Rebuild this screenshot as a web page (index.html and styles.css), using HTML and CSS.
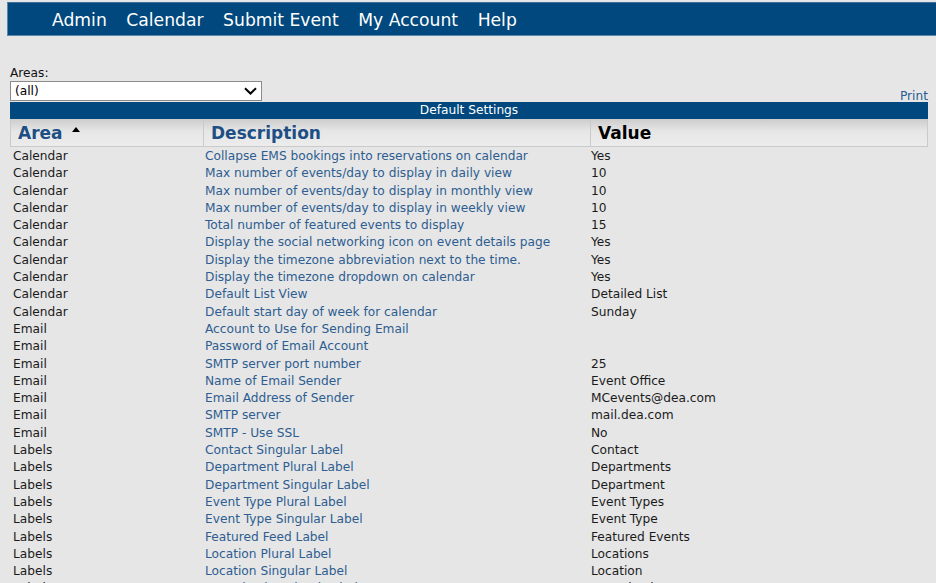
FILE: index.html
```html
<!DOCTYPE html>
<html>
<head>
<meta charset="utf-8">
<link rel="stylesheet" href="styles.css">
</head>
<body>
<div class="nav">
  <a>Admin</a><a>Calendar</a><a>Submit Event</a><a>My Account</a><a>Help</a>
</div>
<div class="content">
  <div class="filters">
    <div class="areas">
      <label>Areas:</label>
      <div class="select"><span>(all)</span>
        <svg width="13" height="8" viewBox="0 0 13 8"><path d="M1 1.2 L6.5 6.5 L12 1.2" fill="none" stroke="#000" stroke-width="2"/></svg>
      </div>
    </div>
    <a class="print">Print</a>
  </div>
  <div class="title">Default Settings</div>
  <div class="grid">
    <div class="hrow">
      <div class="hc c1 blue">Area <span class="arrow"></span></div>
      <div class="hc c2 blue">Description</div>
      <div class="hc c3">Value</div>
    </div>
    <div class="rows">
    <div class="row"><div class="c1">Calendar</div><div class="c2">Collapse EMS bookings into reservations on calendar</div><div class="c3">Yes</div></div>
    <div class="row"><div class="c1">Calendar</div><div class="c2">Max number of events/day to display in daily view</div><div class="c3">10</div></div>
    <div class="row"><div class="c1">Calendar</div><div class="c2">Max number of events/day to display in monthly view</div><div class="c3">10</div></div>
    <div class="row"><div class="c1">Calendar</div><div class="c2">Max number of events/day to display in weekly view</div><div class="c3">10</div></div>
    <div class="row"><div class="c1">Calendar</div><div class="c2">Total number of featured events to display</div><div class="c3">15</div></div>
    <div class="row"><div class="c1">Calendar</div><div class="c2">Display the social networking icon on event details page</div><div class="c3">Yes</div></div>
    <div class="row"><div class="c1">Calendar</div><div class="c2">Display the timezone abbreviation next to the time.</div><div class="c3">Yes</div></div>
    <div class="row"><div class="c1">Calendar</div><div class="c2">Display the timezone dropdown on calendar</div><div class="c3">Yes</div></div>
    <div class="row"><div class="c1">Calendar</div><div class="c2">Default List View</div><div class="c3">Detailed List</div></div>
    <div class="row"><div class="c1">Calendar</div><div class="c2">Default start day of week for calendar</div><div class="c3">Sunday</div></div>
    <div class="row"><div class="c1">Email</div><div class="c2">Account to Use for Sending Email</div><div class="c3"></div></div>
    <div class="row"><div class="c1">Email</div><div class="c2">Password of Email Account</div><div class="c3"></div></div>
    <div class="row"><div class="c1">Email</div><div class="c2">SMTP server port number</div><div class="c3">25</div></div>
    <div class="row"><div class="c1">Email</div><div class="c2">Name of Email Sender</div><div class="c3">Event Office</div></div>
    <div class="row"><div class="c1">Email</div><div class="c2">Email Address of Sender</div><div class="c3">MCevents@dea.com</div></div>
    <div class="row"><div class="c1">Email</div><div class="c2">SMTP server</div><div class="c3">mail.dea.com</div></div>
    <div class="row"><div class="c1">Email</div><div class="c2">SMTP - Use SSL</div><div class="c3">No</div></div>
    <div class="row"><div class="c1">Labels</div><div class="c2">Contact Singular Label</div><div class="c3">Contact</div></div>
    <div class="row"><div class="c1">Labels</div><div class="c2">Department Plural Label</div><div class="c3">Departments</div></div>
    <div class="row"><div class="c1">Labels</div><div class="c2">Department Singular Label</div><div class="c3">Department</div></div>
    <div class="row"><div class="c1">Labels</div><div class="c2">Event Type Plural Label</div><div class="c3">Event Types</div></div>
    <div class="row"><div class="c1">Labels</div><div class="c2">Event Type Singular Label</div><div class="c3">Event Type</div></div>
    <div class="row"><div class="c1">Labels</div><div class="c2">Featured Feed Label</div><div class="c3">Featured Events</div></div>
    <div class="row"><div class="c1">Labels</div><div class="c2">Location Plural Label</div><div class="c3">Locations</div></div>
    <div class="row"><div class="c1">Labels</div><div class="c2">Location Singular Label</div><div class="c3">Location</div></div>
    <div class="row"><div class="c1">Labels</div><div class="c2">Organization Plural Label</div><div class="c3">Organizations</div></div>
    </div>
  </div>
</div>
</body>
</html>
```
FILE: styles.css
```css
html, body {
  margin: 0;
  padding: 0;
  background: #e6e6e6;
  font-family: "DejaVu Sans", Verdana, sans-serif;
  overflow: hidden;
}
.nav {
  margin: 2px 0 0 7px;
  height: 34px;
  background: #00487d;
  border-top: 1px solid #3d6f9a;
  border-bottom: 1px solid #5d86ab;
  border-left: 1px solid #5d86ab;
  box-sizing: border-box;
  display: flex;
  align-items: center;
  padding: 1px 0 0 44px;
  gap: 19.5px;
}
.nav a {
  color: #fff;
  font-size: 17.2px;
}
.content {
  margin: 0 8px 0 10px;
}
.filters {
  display: flex;
  justify-content: space-between;
  align-items: flex-end;
  margin-top: 31px;
}
.areas label {
  display: block;
  font-size: 12.2px;
  color: #111;
  line-height: 13px;
  margin-bottom: 1px;
}
.select {
  width: 252px;
  height: 20px;
  box-sizing: border-box;
  background: #fff;
  border: 1px solid #8a8a8a;
  display: flex;
  align-items: center;
  justify-content: space-between;
  padding: 0 4px 0 4px;
  font-size: 12.2px;
  color: #000;
}
.print {
  color: #2a5c93;
  font-size: 12.2px;
  line-height: 12px;
  margin-bottom: -1px;
}
.title {
  margin-top: 1px;
  background: #00487d;
  color: #fff;
  font-size: 12.2px;
  height: 17px;
  line-height: 17px;
  text-align: center;
}
.grid {
  font-size: 12.2px;
}
.hrow {
  display: flex;
  height: 28px;
  border: 1px solid #cacaca;
  border-top: none;
  background: linear-gradient(#cdcdcd, #e6e6e6 45%, #ececec);
  box-sizing: border-box;
}
.hc {
  font-size: 17px;
  font-weight: bold;
  color: #000;
  display: flex;
  align-items: center;
  padding-left: 7px;
  box-sizing: border-box;
}
.hc.blue { color: #1d4f85; }
.hc + .hc { border-left: 1px solid #cacaca; }
.arrow {
  width: 0; height: 0;
  border-left: 4px solid transparent;
  border-right: 4px solid transparent;
  border-bottom: 5px solid #000;
  margin: 0 0 6px 9px;
}
.c1 { width: 192px; }
.c2 { width: 387px; }
.c3 { flex: 1; }
.rows { padding-top: 1px; }
.row {
  display: flex;
  height: 17.3px;
  line-height: 17.3px;
  color: #1a1a1a;
  white-space: nowrap;
}
.row .c1 { padding-left: 3px; box-sizing: border-box; }
.row .c2 { color: #2d5d91; padding-left: 3px; box-sizing: border-box; }
.row .c3 { padding-left: 2px; }
```
